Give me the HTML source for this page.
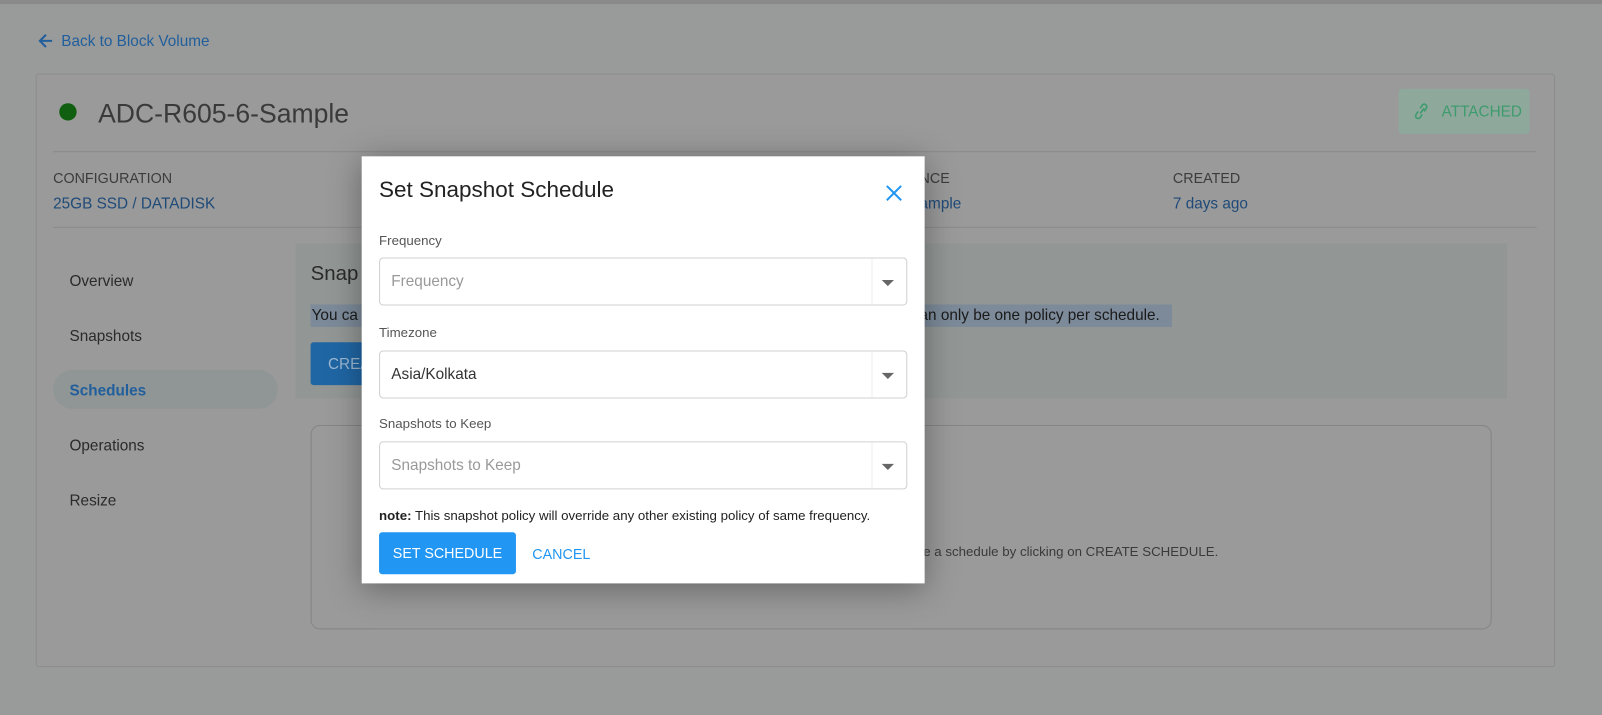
<!DOCTYPE html>
<html style="background:#999a9a"><head><style>
*{box-sizing:border-box;margin:0;padding:0}
body{width:1602px;height:715px;background:#999a9a;font-family:"Liberation Sans",sans-serif;position:relative;overflow:hidden;color:#333}
#w{position:absolute;left:0;top:0;width:1568px;height:700px;transform:scale(1.0217);transform-origin:0 0}
.a{position:absolute}
.topline{left:0;top:0;width:1568px;height:4px;background:#8a8a8a}
.card{left:35px;top:72px;width:1487px;height:581px;border:1px solid #8d8d8d;border-radius:3px;background:#9a9a9a}
.hr{height:1px;background:#8a8a8a}
.lbl{font-size:14px;color:#3c3c3c}
.val{font-size:15px;color:#1f4a78}
.side{font-size:15px;color:#2a2a2a;left:68px}
.modal{left:354px;top:153px;width:551px;height:418px;background:#fff;box-shadow:0 5px 30px rgba(0,0,0,.35)}
.fl{font-size:13px;color:#555;left:17px}
.sel{left:17px;width:517px;height:47px;border:1px solid #d0d0d0;border-radius:4px;font-size:15px;padding:14px 11px;color:#999}
.sel:after{content:"";position:absolute;right:12px;top:21px;border-left:6px solid transparent;border-right:6px solid transparent;border-top:6px solid #666}
.sel:before{content:"";position:absolute;right:33px;top:0;bottom:0;width:1px;background:#eee}
</style></head><body><div id="w">
<div class="a topline"></div>
<svg class="a" style="left:37px;top:32px" width="16" height="16" viewBox="0 0 16 16"><path d="M14 8H2M8 2L2 8l6 6" stroke="#215f9c" stroke-width="2" fill="none"/></svg>
<div class="a" style="left:60px;top:32px;font-size:15px;color:#215f9c">Back to Block Volume</div>
<div class="a card"></div>
<div class="a" style="left:58px;top:101px;width:17px;height:17px;border-radius:50%;background:#105f10"></div>
<div class="a" style="left:96px;top:96px;font-size:26px;color:#3a3a3a">ADC-R605-6-Sample</div>
<div class="a" style="left:1369px;top:87px;width:128px;height:44px;background:#8fa89c;border-radius:3px;color:#3e9b6d;font-size:15px;padding:14px 0 0 42px">ATTACHED</div>
<svg class="a" style="left:1383px;top:100px" width="16" height="18" viewBox="0 0 16 18"><path d="M7 11l4-5M5 9l-2 3a2.5 2.5 0 004 3l2-3M11 9l2-3a2.5 2.5 0 00-4-3L7 6" stroke="#3e9b6d" stroke-width="1.6" fill="none"/></svg>
<div class="a hr" style="left:52px;top:148px;width:1452px"></div>
<div class="a lbl" style="left:52px;top:166px">CONFIGURATION</div>
<div class="a val" style="left:52px;top:191px">25GB SSD / DATADISK</div>
<div class="a lbl" style="left:900px;top:166px">NCE</div>
<div class="a val" style="left:900px;top:191px">ample</div>
<div class="a lbl" style="left:1148px;top:166px">CREATED</div>
<div class="a val" style="left:1148px;top:191px">7 days ago</div>
<div class="a hr" style="left:52px;top:222px;width:1452px"></div>
<div class="a side" style="top:267px">Overview</div>
<div class="a side" style="top:321px">Snapshots</div>
<div class="a" style="left:52px;top:362px;width:220px;height:38px;border-radius:19px;background:#909595"></div>
<div class="a side" style="top:374px;color:#215f9c;font-weight:bold">Schedules</div>
<div class="a" style="left:289px;top:238px;width:1186px;height:152px;background:#929795"></div>
<div class="a" style="left:304px;top:257px;font-size:20px;color:#2a2a2a">Snap</div>
<div class="a" style="left:304px;top:298px;width:843px;height:22px;background:#7c8a99"></div>
<div class="a" style="left:305px;top:300px;font-size:15px;color:#1a1a1a">You ca</div>
<div class="a" style="left:900px;top:300px;font-size:15px;color:#1a1a1a">an only be one policy per schedule.</div>
<div class="a" style="left:304px;top:335px;width:60px;height:42px;background:#1f66a4;border-radius:3px;color:#9cb8d3;font-size:15px;padding:13px 0 0 17px">CREA</div>
<div class="a" style="left:304px;top:416px;width:1156px;height:200px;border:1px solid #858585;border-radius:9px"></div>
<div class="a" style="left:900px;top:532px;font-size:13px;color:#3a3a3a">te a schedule by clicking on CREATE SCHEDULE.</div>
<div class="a side" style="top:428px">Operations</div>
<div class="a side" style="top:482px">Resize</div>
<div class="a modal">
<div class="a" style="left:17px;top:20px;font-size:22px;color:#222">Set Snapshot Schedule</div>
<svg class="a" style="left:512px;top:27px" width="18" height="18" viewBox="0 0 18 18"><path d="M2 2L16 16M16 2L2 16" stroke="#2196f3" stroke-width="2"/></svg>
<div class="a fl" style="top:75px">Frequency</div>
<div class="a sel" style="top:99px">Frequency</div>
<div class="a fl" style="top:165px">Timezone</div>
<div class="a sel" style="top:190px;color:#333">Asia/Kolkata</div>
<div class="a fl" style="top:254px">Snapshots to Keep</div>
<div class="a sel" style="top:279px">Snapshots to Keep</div>
<div class="a" style="left:17px;top:344px;font-size:13px;color:#222"><b>note:</b> This snapshot policy will override any other existing policy of same frequency.</div>
<div class="a" style="left:17px;top:368px;width:134px;height:41px;background:#2196f3;border-radius:3px;color:#fff;font-size:14px;text-align:center;line-height:41px">SET SCHEDULE</div>
<div class="a" style="left:167px;top:381px;font-size:14px;color:#2196f3">CANCEL</div>
</div>
</div></body></html>
